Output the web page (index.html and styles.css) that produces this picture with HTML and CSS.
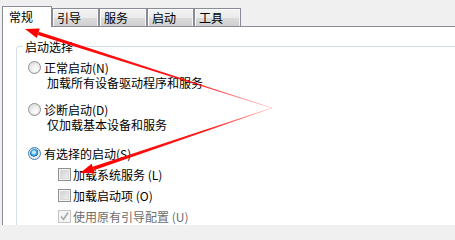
FILE: index.html
```html
<!DOCTYPE html>
<html lang="zh-CN">
<head>
<meta charset="utf-8">
<title>系统配置</title>
<link rel="stylesheet" href="styles.css">
</head>
<body>
<div class="win">
  <div class="tabs">
    <div class="tab sel">常规</div>
    <div class="tab">引导</div>
    <div class="tab w48">服务</div>
    <div class="tab">启动</div>
    <div class="tab">工具</div>
  </div>
  <div class="panel">
    <fieldset class="group">
      <legend>启动选择</legend>
      <div class="opt r1"><span class="radio"></span><span>正常启动(N)</span></div>
      <div class="desc">加载所有设备驱动程序和服务</div>
      <div class="opt r2"><span class="radio"></span><span>诊断启动(D)</span></div>
      <div class="desc">仅加载基本设备和服务</div>
      <div class="opt r3"><span class="radio on"></span><span>有选择的启动(S)</span></div>
      <div class="chk c1"><span class="box"></span><span>加载系统服务 (L)</span></div>
      <div class="chk"><span class="box"></span><span>加载启动项 (O)</span></div>
      <div class="chk dis"><span class="box"><svg viewBox="0 0 11 11" width="11" height="11"><polyline points="2,5.5 4.5,8.5 9,1.5" fill="none" stroke="#a8a8a8" stroke-width="1.6"/></svg></span><span>使用原有引导配置 (U)</span></div>
    </fieldset>
  </div>
</div>
<svg class="arrows" width="455" height="225" viewBox="0 0 455 225">
  <defs>
    <linearGradient id="g1" gradientUnits="userSpaceOnUse" x1="272" y1="108" x2="25" y2="29">
      <stop offset="0" stop-color="#ff0000" stop-opacity="0.25"/>
      <stop offset="0.35" stop-color="#ff0000" stop-opacity="0.9"/>
      <stop offset="1" stop-color="#ff0000"/>
    </linearGradient>
    <linearGradient id="g2" gradientUnits="userSpaceOnUse" x1="272" y1="108" x2="80" y2="173">
      <stop offset="0" stop-color="#ff0000" stop-opacity="0.25"/>
      <stop offset="0.35" stop-color="#ff0000" stop-opacity="0.9"/>
      <stop offset="1" stop-color="#ff0000"/>
    </linearGradient>
  </defs>
  <polygon fill="url(#g1)" points="272.08,107.76 38.83,31.63 37.77,34.97 271.92,108.24"/>
  <polygon fill="#ff0000" points="25,29 39.82,28.54 36.78,38.06"/>
  <polygon fill="url(#g2)" points="272.08,108.24 93.82,170.17 92.70,166.85 271.92,107.76"/>
  <polygon fill="#ff0000" points="80,173 94.86,173.25 91.66,163.77"/>
</svg>
</body>
</html>
```
FILE: styles.css
```css
html, body {
  margin: 0;
  padding: 0;
}
body {
  width: 455px;
  height: 225px;
  overflow: hidden;
  background: #f0f0f0;
  font-family: "Noto Sans CJK SC", "Noto Sans", sans-serif;
  font-size: 12px;
  color: #000;
  position: relative;
}
.win {
  margin-left: 2px;
}
.tabs {
  display: flex;
  align-items: flex-end;
  height: 26px;
  border-bottom: 1px solid #898c95;
}
.tab {
  box-sizing: border-box;
  width: 47px;
  height: 18px;
  border: 1px solid #898c95;
  border-bottom: none;
  padding-left: 4px;
  line-height: 16px;
  padding-top: 1px;
  background: linear-gradient(#f3f3f3 0%, #ebebeb 50%, #dcdcdc 51%, #cfcfcf 100%);
  box-shadow: inset 1px 1px 0 #fbfbfb, inset -1px 0 0 #f4f4f4;
}
.tab.w48 {
  width: 48px;
}
.tab.sel {
  width: 50px;
  height: 21px;
  margin-bottom: -1px;
  background: #fff;
  box-shadow: none;
  padding-left: 6px;
  padding-top: 2px;
  position: relative;
}
.panel {
  border-left: 1px solid #898c95;
  background: #fff;
  height: 198px;
  overflow: hidden;
}
.group {
  margin: 12px 0 0 13px;
  padding: 6px 0 0 11px;
  width: 500px;
  height: 300px;
  border: 1px solid #d5dfe5;
  border-radius: 3px;
  min-width: 0;
}
.group legend {
  margin-left: -5px;
  padding: 0 2px;
  line-height: 15px;
}
.opt, .chk, .desc {
  line-height: 15px;
  height: 15px;
  white-space: nowrap;
}
.opt, .chk {
  display: flex;
  align-items: center;
}
.opt {
  gap: 3px;
}
.r2 {
  margin-top: 12px;
}
.r3 {
  margin-top: 14px;
}
.desc {
  padding-left: 19px;
}
.chk {
  margin-top: 6px;
  padding-left: 30px;
  gap: 2px;
}
.chk.c1 {
  margin-top: 6px;
}
.radio {
  box-sizing: border-box;
  width: 13px;
  height: 13px;
  flex: none;
  border-radius: 50%;
  border: 1px solid #8e8f8f;
  background: radial-gradient(circle at 65% 70%, #ffffff 0%, #f1f1f1 40%, #cfcfcf 100%);
  box-shadow: inset 0 0 0 1px #e6e6e6;
}
.radio.on {
  border-color: #3b7fb5;
  background:
    radial-gradient(circle at 45% 40%, #bfe8ff 0 1.5px, #45aef0 2.5px, #1a6fb8 4px, transparent 4.5px),
    radial-gradient(circle, #ffffff 0%, #eaeaea 100%);
}
.box {
  box-sizing: border-box;
  width: 13px;
  height: 13px;
  flex: none;
  border: 1px solid #8e8f8f;
  background: linear-gradient(135deg, #cbcbcb, #f6f6f6);
  box-shadow: inset 0 0 0 1px #f4f4f4, inset 0 0 0 2px #d9d9d9;
  display: flex;
  align-items: center;
  justify-content: center;
}
.dis {
  color: #6d6d6d;
}
.dis .box {
  border-color: #c4c4c4;
  background: #f4f4f4;
  box-shadow: none;
}
.box svg {
  display: block;
}
.arrows {
  position: absolute;
  left: 0;
  top: 0;
  pointer-events: none;
}
```
